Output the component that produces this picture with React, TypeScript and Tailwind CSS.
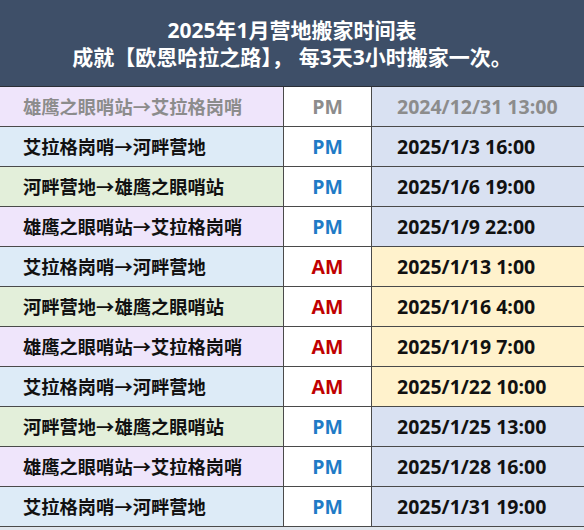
import React from 'react';

type Row = { route: string; ampm: 'AM' | 'PM'; time: string; past?: boolean };

const routeA = '雄鹰之眼哨站→艾拉格岗哨';
const routeB = '艾拉格岗哨→河畔营地';
const routeC = '河畔营地→雄鹰之眼哨站';

const rows: Row[] = [
  { route: routeA, ampm: 'PM', time: '2024/12/31 13:00', past: true },
  { route: routeB, ampm: 'PM', time: '2025/1/3 16:00' },
  { route: routeC, ampm: 'PM', time: '2025/1/6 19:00' },
  { route: routeA, ampm: 'PM', time: '2025/1/9 22:00' },
  { route: routeB, ampm: 'AM', time: '2025/1/13 1:00' },
  { route: routeC, ampm: 'AM', time: '2025/1/16 4:00' },
  { route: routeA, ampm: 'AM', time: '2025/1/19 7:00' },
  { route: routeB, ampm: 'AM', time: '2025/1/22 10:00' },
  { route: routeC, ampm: 'PM', time: '2025/1/25 13:00' },
  { route: routeA, ampm: 'PM', time: '2025/1/28 16:00' },
  { route: routeB, ampm: 'PM', time: '2025/1/31 19:00' },
];

const routeBg: Record<string, string> = {
  [routeA]: 'bg-[#efe5fb]',
  [routeB]: 'bg-[#ddebf7]',
  [routeC]: 'bg-[#e3efda]',
};

export default function App() {
  return (
    <div className="w-[584px] h-[530px] overflow-hidden bg-[#dfe5ec] font-bold font-['Noto_Sans_CJK_SC','Noto_Sans',sans-serif]">
      <div className="h-[86px] bg-[#3e4f68] flex flex-col items-center justify-center text-white text-[21px] leading-[27px] pt-px font-['Open_Sans','Noto_Sans_CJK_SC',sans-serif]">
        <div>2025年1月营地搬家时间表</div>
        <div>
          成就【欧恩哈拉之路】，<span className="ml-[6px]">每3天3小时搬家一次。</span>
        </div>
      </div>
      <div className="border-t border-[#2b2f36]">
        {rows.map((r, i) => (
          <div
            key={i}
            className="grid grid-cols-[283px_88px_1fr] h-[40px] border-b border-[#4a4a4a]"
          >
            <div
              className={`${routeBg[r.route]} flex items-center pl-[23px] text-[18.3px] ${
                r.past ? 'text-[#8c8c8c]' : 'text-[#111]'
              }`}
            >
              {r.route}
            </div>
            <div
              className={`bg-white border-l border-[#4a4a4a] flex items-center justify-center text-[19.5px] font-['Open_Sans',sans-serif] ${
                r.past ? 'text-[#8c8c8c]' : r.ampm === 'AM' ? 'text-[#c00000]' : 'text-[#1f7bc6]'
              }`}
            >
              {r.ampm}
            </div>
            <div
              className={`border-l border-[#4a4a4a] flex items-center pl-[25px] text-[19.5px] font-['Open_Sans',sans-serif] ${
                r.ampm === 'AM' ? 'bg-[#fff2cc]' : 'bg-[#d9e1f2]'
              } ${r.past ? 'text-[#8c8c8c]' : 'text-[#111]'}`}
            >
              {r.time}
            </div>
          </div>
        ))}
      </div>
    </div>
  );
}
